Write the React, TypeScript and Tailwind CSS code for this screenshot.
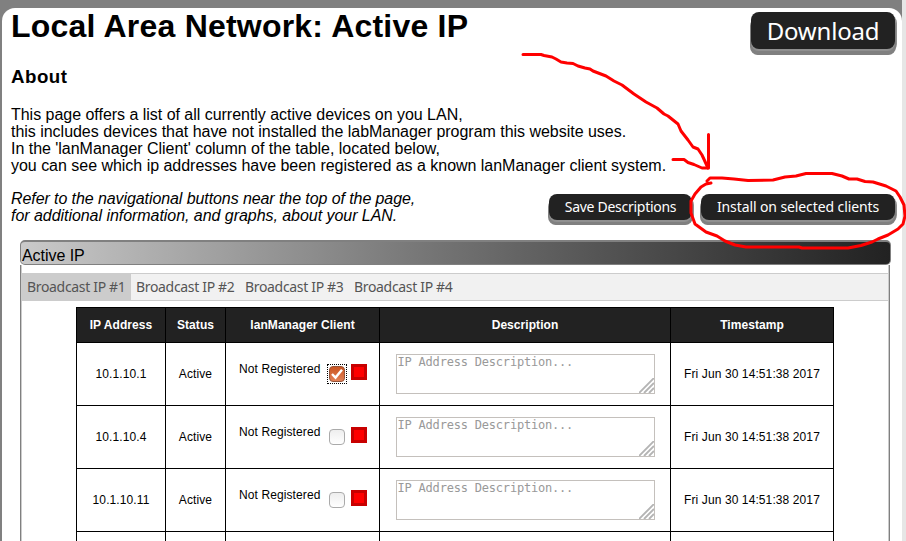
import type { ReactNode } from "react";

const rows = [
  { ip: "10.1.10.1", checked: true },
  { ip: "10.1.10.4", checked: false },
  { ip: "10.1.10.11", checked: false },
];

const tabs = ["Broadcast IP #1", "Broadcast IP #2", "Broadcast IP #3", "Broadcast IP #4"];

function Checkbox({ checked }: { checked: boolean }) {
  return (
    <span
      className={
        checked
          ? "flex size-5 items-center justify-center border border-dotted border-black"
          : "flex size-5 items-center justify-center"
      }
    >
      <svg className="shrink-0" width="16" height="16" viewBox="0 0 16 16">
        <defs>
          <linearGradient id="box-on" x1="0" y1="0" x2="0" y2="1">
            <stop offset="0" stopColor="#c9531f" />
            <stop offset="1" stopColor="#e48358" />
          </linearGradient>
          <linearGradient id="box-off" x1="0" y1="0" x2="0" y2="1">
            <stop offset="0" stopColor="#ededed" />
            <stop offset="1" stopColor="#ffffff" />
          </linearGradient>
        </defs>
        <rect
          x="0.5"
          y="0.5"
          width="15"
          height="15"
          rx="3.5"
          fill={checked ? "url(#box-on)" : "url(#box-off)"}
          stroke={checked ? "#94563c" : "#aaaaaa"}
        />
        {checked && <path d="M3 8 L6.5 11.600 L13 3.800" fill="none" stroke="#fff" strokeWidth="2.4" />}
      </svg>
    </span>
  );
}

function DescriptionBox() {
  return (
    <div className="relative mx-auto h-10 w-[259px] border border-[#c4c0bc] bg-white pl-px text-left font-['DejaVu_Sans_Mono',monospace] text-[12px] leading-[15px] tracking-[-0.2px] text-[#999]">
      IP Address Description...
      <svg className="absolute right-0 bottom-0" width="15" height="15" viewBox="0 0 15 15">
        <path d="M0 15 L15 0 M5 15 L15 5 M10 15 L15 10" stroke="#b4b4b4" strokeWidth="1.9" />
      </svg>
    </div>
  );
}

function Cell({ children }: { children?: ReactNode }) {
  return <td className="border border-black p-0">{children}</td>;
}

export default function App() {
  return (
    <div className="relative flex h-[541px] w-[906px] overflow-hidden bg-[#808080] pl-[2px] font-['Liberation_Sans',Arial,sans-serif] text-black">
      <main className="mt-2 w-[900px] shrink-0 rounded-t-[13px] bg-white pr-[7px] pl-[9px]">
        <div className="flex h-[58px] items-start justify-between">
          <h1 className="text-[32px] leading-9 font-bold tracking-[0.21px]">Local Area Network: Active IP</h1>
          <button className="mt-1 h-[37px] w-[144px] rounded-lg bg-[#222] font-['Noto_Sans','Open_Sans',sans-serif] text-[24px] leading-[37px] tracking-[-0.2px] text-white shadow-[0_2px_0_#909090,-1px_6px_0_#808080,1px_6px_0_#808080,2px_3px_0_#909090]">
            Download
          </button>
        </div>
        <h2 className="h-10 text-[18.72px] leading-[22px] font-bold tracking-[0.5px]">About</h2>
        <p className="text-base leading-[17px] tracking-[-0.025px]">
          This page offers a list of all currently active devices on you LAN,
          <br />
          this includes devices that have not installed the labManager program this website uses.
          <br />
          In the 'lanManager Client' column of the table, located below,
          <br />
          you can see which ip addresses have been registered as a known lanManager client system.
        </p>
        <div className="flex items-start justify-between pt-4">
          <p className="text-base leading-[17px] italic">
            <span className="tracking-[-0.085px]">Refer to the navigational buttons near the top of the page,</span>
            <br />
            <span className="tracking-[-0.045px]">for additional information, and graphs, about your LAN.</span>
          </p>
          <div className="mt-1 flex gap-[9px] font-['Noto_Sans','Open_Sans',sans-serif] text-[14px] leading-[26px] whitespace-nowrap text-white">
            <button className="h-[26px] w-[143px] rounded-lg bg-[#222] tracking-[-0.28px] shadow-[0_2px_0_#909090,-1px_5px_0_#808080,1px_5px_0_#808080,2px_3px_0_#909090]">
              Save Descriptions
            </button>
            <button className="h-[26px] w-[194px] rounded-lg bg-[#222] tracking-[-0.1px] shadow-[0_2px_0_#909090,-1px_5px_0_#808080,1px_5px_0_#808080,2px_3px_0_#909090]">
              Install on selected clients
            </button>
          </div>
        </div>
        <section className="mt-4 ml-[9px] w-[871px]">
          <div className="h-[25px] rounded-[5px] border border-t-2 border-[#808080] bg-gradient-to-r from-[#cacaca] to-[#222] pl-px text-base leading-[27px] tracking-[-0.05px]">
            Active IP
          </div>
          <div className="h-[290px] w-[870px] border-x border-[#808080]">
            <div className="h-full border-x border-[#ccc] pt-2">
              <nav className="flex h-7 border-y border-[#ccc] bg-[#f1f1f1] font-['Noto_Sans','Open_Sans',sans-serif] text-[14px] leading-[26px] tracking-[-0.33px] whitespace-nowrap text-[#555]">
                {tabs.map((tab, i) => (
                  <span key={tab} className={i === 0 ? "w-[109px] bg-[#ccc] pl-[5px]" : "w-[109px] pl-[5px]"}>
                    {tab}
                  </span>
                ))}
              </nav>
              <table className="mt-[6px] ml-[54px] w-[758px] table-fixed border-collapse text-center text-[12px] leading-[14px]">
                <colgroup>
                  <col className="w-[89px]" />
                  <col className="w-[60px]" />
                  <col className="w-[154px]" />
                  <col className="w-[291px]" />
                  <col className="w-[163px]" />
                </colgroup>
                <thead>
                  <tr className="h-[35px] bg-[#222] text-white">
                    {["IP Address", "Status", "lanManager Client", "Description", "Timestamp"].map((name) => (
                      <th key={name} className="border border-black p-0 font-bold tracking-[0.06px]">
                        {name}
                      </th>
                    ))}
                  </tr>
                </thead>
                <tbody className="tracking-[0.1px]">
                  {rows.map((row) => (
                    <tr key={row.ip} className="h-[63px]">
                      <Cell>{row.ip}</Cell>
                      <Cell>Active</Cell>
                      <Cell>
                        <div className="flex items-center pl-[13px]">
                          <span className="w-[82px] pb-[10px] text-left">Not Registered</span>
                          <span className="ml-[6px]">
                            <Checkbox checked={row.checked} />
                          </span>
                          <span className="mb-1 ml-1 size-4 border-[3px] border-[#c80000] bg-[#ff0000]" />
                        </div>
                      </Cell>
                      <Cell>
                        <DescriptionBox />
                      </Cell>
                      <Cell>Fri Jun 30 14:51:38 2017</Cell>
                    </tr>
                  ))}
                  <tr className="h-[63px]">
                    <Cell />
                    <Cell />
                    <Cell />
                    <Cell />
                    <Cell />
                  </tr>
                </tbody>
              </table>
            </div>
          </div>
        </section>
      </main>
      <div className="w-1 shrink-0 bg-[#e6e6e6]" />
      {/* Hand-drawn arrow and loop around the install button */}
      <svg
        className="pointer-events-none absolute inset-0"
        width="906"
        height="541"
        viewBox="0 0 906 541"
        fill="none"
        stroke="#ff0000"
        strokeWidth="3"
        strokeLinecap="round"
        strokeLinejoin="round"
      >
        <path d="M523 54.500 L541 54.500 L544 55.500 L552 57 L556 59 L561 62 L567 63 L573 63.500 L578 66 L585 68 L590 69 L593 71 L606 76 L614 81 L622 85 L634 94 L646 102 L657 108 L664 114 L668 116 L678 124 L681 131 L688 140 L693 147 L698 149 L702 155 L708 168" />
        <path d="M708.500 134.500 V168 L702 168 L694 164.500 L688 162.500 L684 159.500 H673" />
        <path d="M711 183 L706 184 L701 187 L695 194 L691 201 L691 213 L695 224 L706 232 L717 236 L725 241 L735 245 L746 247 L799 247 L802 248 L848 248 L861 245.500 L872 242 L878 239 L888 235 L898 229 L903 224 L905 216 L904 205 L900 197 L896 191 L886 186 L873 182 L865 181.500 L857 179 L849 179 L842 176 L832 173.500 L806 173.500 L796 176 L785 177 L773 180 L748 180.500 L734 179 L722 178 L710 178 L707 181" />
      </svg>
    </div>
  );
}
